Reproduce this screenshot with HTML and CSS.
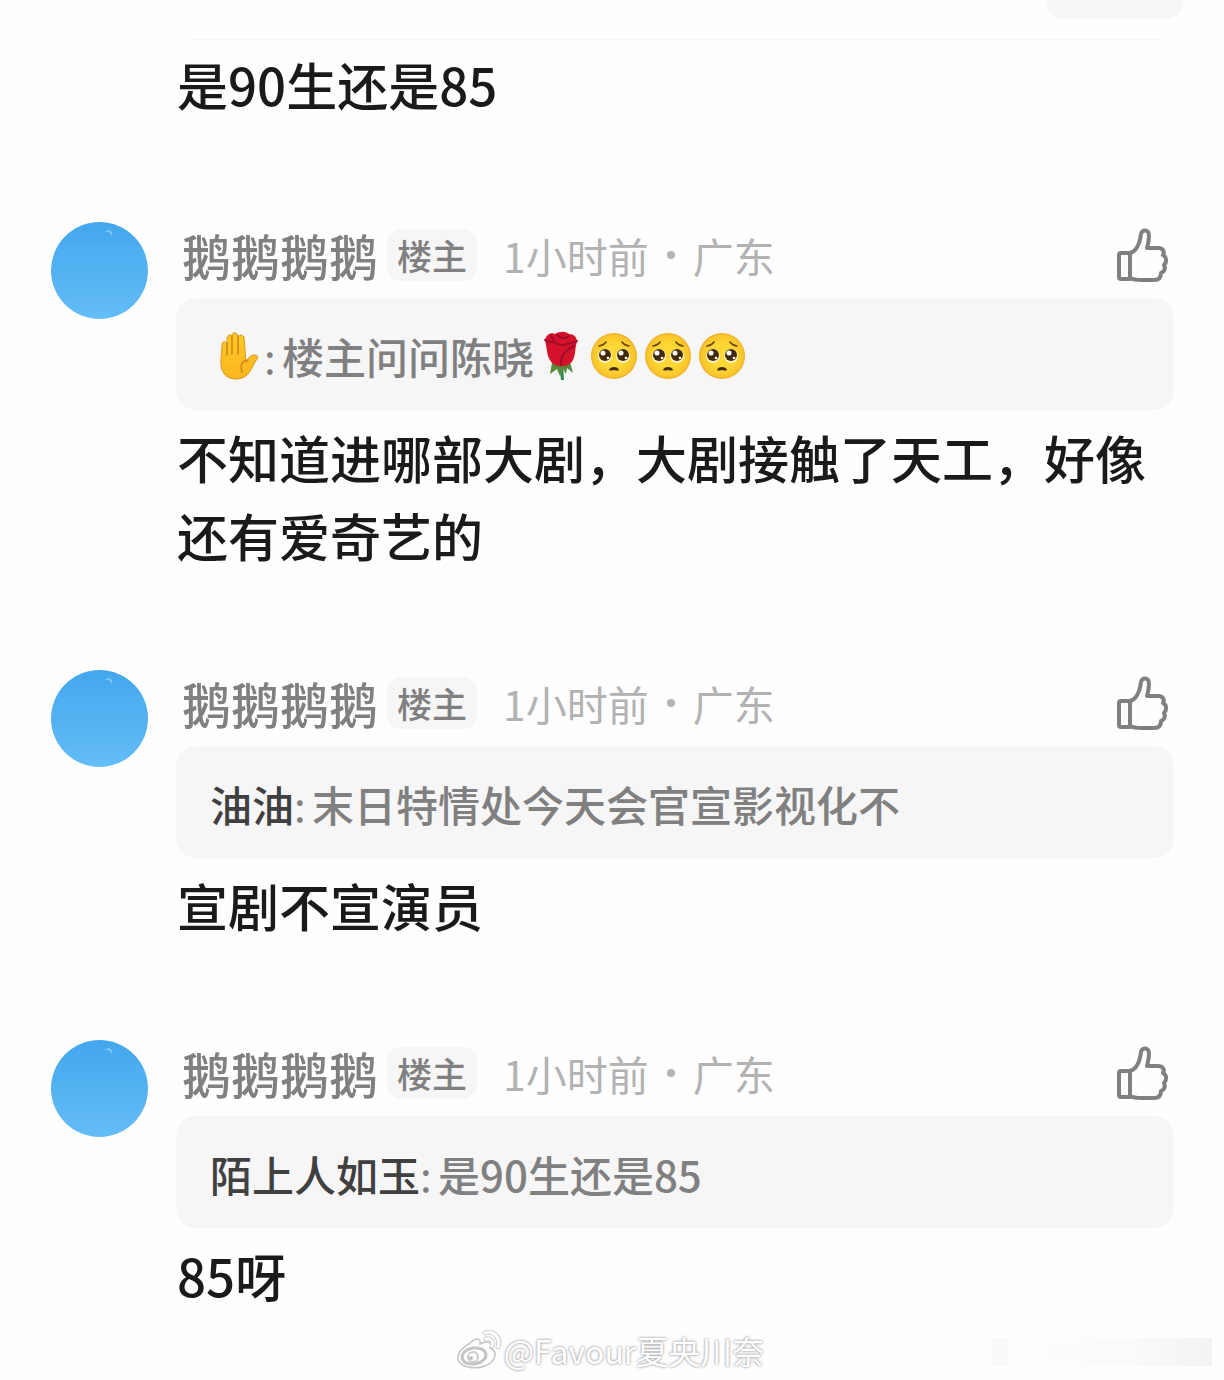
FILE: index.html
```html
<!DOCTYPE html>
<html lang="zh-CN">
<head>
    <meta charset="UTF-8">
    <meta name="viewport" content="width=device-width, initial-scale=1.0">
    <title>评论</title>
    <link rel="stylesheet" href="styles.css">
</head>
<body>
    <!-- shared icons -->
    <svg class="sprite" aria-hidden="true">
        <defs>
            <linearGradient id="skin" x1="0" y1="0" x2="0" y2="1">
                <stop offset="0" stop-color="#ffca28"/>
                <stop offset="1" stop-color="#fbb41f"/>
            </linearGradient>
            <radialGradient id="face">
                <stop offset="0.5" stop-color="#fdd835"/>
                <stop offset="0.9" stop-color="#f9c62c"/>
                <stop offset="1" stop-color="#f0ad28"/>
            </radialGradient>
        </defs>
        <symbol id="like" viewBox="0 0 54 54">
            <g fill="none" stroke="#808080" stroke-width="4" stroke-linejoin="round" stroke-linecap="round">
                <path d="M6 25H15V51H6Q4 51 4 49V27Q4 25 6 25Z"/>
                <path d="M15 25C22 23 25 14 26 6C27 1 34 1 34 8C34 13 33 16 32 20H43C48 20 50 24 48 27C52 29 52 34 49 37C51 41 49 44 46 45C46 50 43 52 39 52H26Q19 52 15 50"/>
            </g>
        </symbol>
        <symbol id="hand" viewBox="0 0 40 48">
            <path d="M2 14Q2 9 5 10Q7 10 7 13V6Q8 2 11 3L12 6V3Q14 -1 17 2L18 5Q21 1 24 5L26 31Q29 23 34 23Q39 23 37 27C31 35 30 47 16 47C4 47 0 38 1 27Z" fill="url(#skin)" stroke="#dc9a1b" stroke-width="1"/>
            <path d="M7 11V23M12 5V22M18 4V22M22 40Q19 29 28 28" fill="none" stroke="#c98517" stroke-width="1.5" stroke-linecap="round"/>
        </symbol>
        <symbol id="rose" viewBox="0 0 36 50">
            <path d="M16 32L18 49H21L20 32Z" fill="#2e8b57"/>
            <path d="M9 32L7 43L14 38L17 45L20 38L23 43L24 37L30 42L27 31Z" fill="#558b3a"/>
            <path d="M2 9C3 4 8 1 12 3C17 0 22 0 26 3C31 3 34 6 34 11C32 15 33 23 30 29C27 35 20 36 16 35C8 34 5 27 4 20Z" fill="#d5122c"/>
            <path d="M2 9Q6 12 11 11Q20 16 23 13Q29 13 34 10M18 34C17 26 22 19 31 15M8 4L11 10M14 4Q20 10 26 5" fill="none" stroke="#9c0c26" stroke-width="2" stroke-linecap="round"/>
        </symbol>
        <symbol id="pleading" viewBox="0 0 48 48">
            <circle cx="24" cy="24" r="23" fill="url(#face)"/>
            <circle cx="15" cy="24" r="7" fill="#fff3c4"/>
            <circle cx="33" cy="24" r="7" fill="#fff3c4"/>
            <circle cx="15" cy="23" r="6" fill="#422b0d"/>
            <circle cx="33" cy="23" r="6" fill="#422b0d"/>
            <circle cx="13" cy="21" r="2.5" fill="#fff"/>
            <circle cx="31" cy="21" r="2.5" fill="#fff"/>
            <circle cx="18" cy="26" r="1.3" fill="#fff"/>
            <circle cx="36" cy="26" r="1.3" fill="#fff"/>
            <path d="M9 14Q14 13 16 10M32 10Q34 13 39 14" fill="none" stroke="#6d4316" stroke-width="1.6" stroke-linecap="round"/>
            <path d="M19 38Q20 35 24 35Q28 35 29 38Q28 39 24 38Q20 39 19 38Z" fill="#422b0d"/>
        </symbol>
        <symbol id="weibo" viewBox="0 0 46 40">
            <path d="M14 13C20 7 25 8 24 14C33 10 37 13 34 18C43 22 39 32 29 36C18 40 4 37 2 29C1 24 6 18 14 13Z" fill="#fff" stroke="#c6c6c6" stroke-width="1.5"/>
            <ellipse cx="18" cy="26" rx="12" ry="8" fill="#fff" stroke="#c4c4c4" stroke-width="3" transform="rotate(-8 18 26)"/>
            <circle cx="17" cy="27" r="5" fill="#fff" stroke="#cacaca" stroke-width="2"/>
            <circle cx="15" cy="28" r="2" fill="#bdbdbd"/>
            <path d="M29 3C38 0 45 8 42 17M30 9C35 8 38 12 36 16" fill="none" stroke="#cdcdcd" stroke-width="5" stroke-linecap="round"/>
            <path d="M29 3C38 0 45 8 42 17M30 9C35 8 38 12 36 16" fill="none" stroke="#fff" stroke-width="3" stroke-linecap="round"/>
        </symbol>
    </svg>

    <main class="thread">
        <section class="previous">
            <div class="pill"></div>
            <hr class="divider">
            <p class="text">是90生还是85</p>
        </section>

        <article class="comment">
            <div class="avatar"></div>
            <div class="content">
                <header class="meta">
                    <span class="name">鹅鹅鹅鹅</span>
                    <span class="badge">楼主</span>
                    <span class="time">1小时前<i class="dot"></i>广东</span>
                    <button class="like" aria-label="点赞"><svg><use href="#like"/></svg></button>
                </header>
                <blockquote class="quote">
                    <svg class="emoji hand"><use href="#hand"/></svg>
                    <span class="colon">:</span>
                    <span>楼主问问陈晓</span>
                    <svg class="emoji rose"><use href="#rose"/></svg>
                    <svg class="emoji face"><use href="#pleading"/></svg>
                    <svg class="emoji face"><use href="#pleading"/></svg>
                    <svg class="emoji face"><use href="#pleading"/></svg>
                </blockquote>
                <p class="text">不知道进哪部大剧，大剧接触了天工，好像还有爱奇艺的</p>
            </div>
        </article>

        <article class="comment">
            <div class="avatar"></div>
            <div class="content">
                <header class="meta">
                    <span class="name">鹅鹅鹅鹅</span>
                    <span class="badge">楼主</span>
                    <span class="time">1小时前<i class="dot"></i>广东</span>
                    <button class="like" aria-label="点赞"><svg><use href="#like"/></svg></button>
                </header>
                <blockquote class="quote">
                    <span class="author">油油</span>
                    <span class="colon">:</span>
                    <span>末日特情处今天会官宣影视化不</span>
                </blockquote>
                <p class="text">宣剧不宣演员</p>
            </div>
        </article>

        <article class="comment">
            <div class="avatar"></div>
            <div class="content">
                <header class="meta">
                    <span class="name">鹅鹅鹅鹅</span>
                    <span class="badge">楼主</span>
                    <span class="time">1小时前<i class="dot"></i>广东</span>
                    <button class="like" aria-label="点赞"><svg><use href="#like"/></svg></button>
                </header>
                <blockquote class="quote">
                    <span class="author">陌上人如玉</span>
                    <span class="colon">:</span>
                    <span>是90生还是85</span>
                </blockquote>
                <p class="text">85呀</p>
            </div>
        </article>
    </main>

    <footer class="watermark">
        <svg class="logo"><use href="#weibo"/></svg>
        <span>@Favour夏央川奈</span>
        <div class="smear"></div>
    </footer>
</body>
</html>
```

FILE: styles.css
```css
:root {
    --text: #1a1a1a;
    --text-gray: #808080;
    --text-light: #b2b2b2;
    --panel: #f6f6f6;
}
* {
    box-sizing: border-box;
}
body {
    margin: 0;
    background: #fefefe;
    color: var(--text);
    font-family: "Noto Sans CJK SC", "Noto Sans", sans-serif;
}
.sprite {
    position: absolute;
    width: 0;
    height: 0;
}
.thread {
    padding: 0 50px 0 51px;
}
.previous {
    padding-left: 125px;
    margin-bottom: 99px;
}
.pill {
    width: 138px;
    height: 19px;
    margin: 0 -10px 20px auto;
    background: var(--panel);
    border-radius: 0 0 20px 20px;
}
.divider {
    height: 1px;
    margin: 0 16px 5px;
    border: none;
    background: #f5f5f5;
}
.text {
    margin: 0;
    padding-left: 1px;
    font-size: 51px;
    font-weight: 500;
    line-height: 78px;
}
.comment {
    display: flex;
    gap: 28px;
    margin-bottom: 96px;
}
.comment:last-child {
    margin-bottom: 0;
}
.avatar {
    position: relative;
    flex: none;
    width: 97px;
    height: 97px;
    border-radius: 50%;
    background: linear-gradient(#43a7ed, #64bdf6);
}
/* little highlight near the top edge */
.avatar::after {
    content: "";
    position: absolute;
    top: 8px;
    left: 52px;
    width: 9px;
    height: 9px;
    border-top: 2px solid #8accf8;
    border-radius: 50%;
    transform: rotate(35deg);
}
.content {
    flex: 1;
    min-width: 0;
}
.meta {
    display: flex;
    align-items: center;
    height: 66px;
    margin-bottom: 10px;
    padding-left: 6px;
    white-space: nowrap;
}
.name {
    color: var(--text-gray);
    font-size: 49px;
    font-weight: 500;
    line-height: 66px;
}
.badge {
    margin-left: 9px;
    padding: 0 10px;
    border-radius: 14px;
    background: var(--panel);
    color: var(--text-gray);
    font-size: 35px;
    font-weight: 500;
    line-height: 52px;
}
.time {
    display: flex;
    align-items: center;
    margin-left: 26px;
    color: var(--text-light);
    font-size: 41px;
    line-height: 66px;
}
.dot {
    width: 8px;
    height: 8px;
    margin: 0 18px;
    border-radius: 50%;
    background: var(--text-light);
}
.like {
    width: 54px;
    height: 54px;
    margin: 0 5px 0 auto;
    padding: 0;
    border: none;
    background: none;
    cursor: pointer;
}
.like svg {
    display: block;
    width: 54px;
    height: 54px;
}
.quote {
    display: flex;
    align-items: center;
    min-height: 112px;
    margin: 0 0 8px;
    padding: 4px 34px 0;
    border-radius: 20px;
    background: var(--panel);
    color: var(--text-gray);
    font-size: 42px;
    font-weight: 500;
    line-height: 64px;
}
.author {
    color: #404040;
}
.colon {
    width: 18px;
    font-weight: 400;
}
.emoji {
    flex: none;
    height: 48px;
}
.hand {
    width: 40px;
    margin: 0 4px 0 10px;
}
.rose {
    width: 36px;
    height: 50px;
    margin: 0 11px 0 9px;
}
.face {
    width: 48px;
    margin-right: 6px;
}
.watermark {
    position: relative;
    display: flex;
    justify-content: center;
    align-items: center;
    gap: 2px;
    padding: 12px 4px 6px 0;
    color: #fff;
    font-size: 32px;
    line-height: 48px;
    text-shadow: 0 0 3px #999, 0 0 2px #bbb;
}
.logo {
    width: 46px;
    height: 40px;
}
/* faint trail left in the corner */
.smear {
    position: absolute;
    right: 12px;
    top: 24px;
    width: 220px;
    height: 28px;
    background: linear-gradient(90deg, #f9f9f9 6%, #fdfdfd 8%, #fbfbfb 60%, #f3f3f3);
}
```
